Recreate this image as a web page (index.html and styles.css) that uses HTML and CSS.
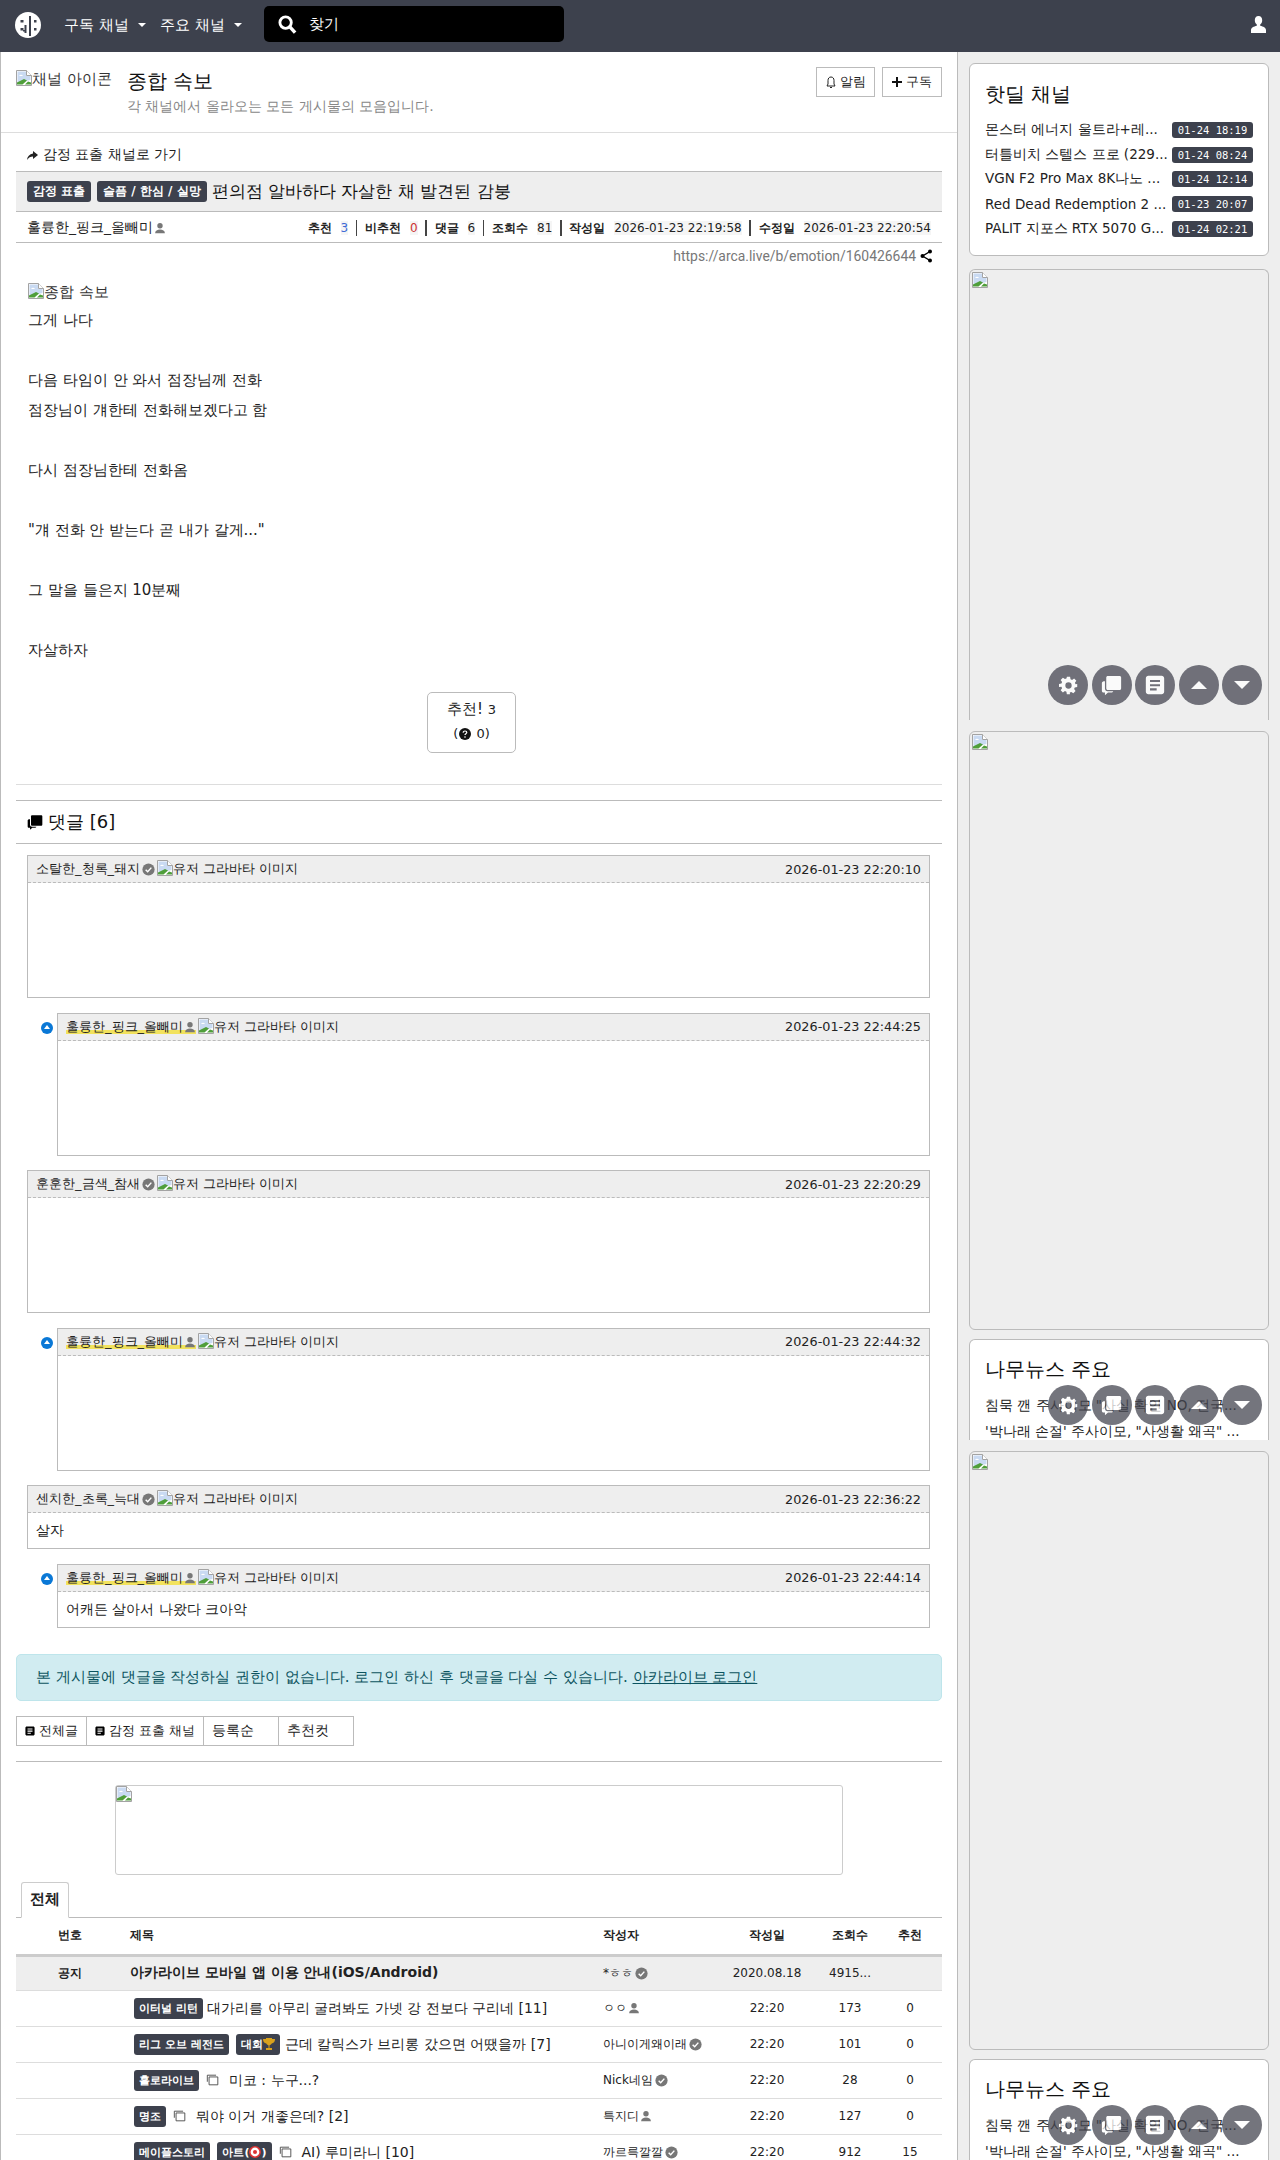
FILE: index.html
```html
<!DOCTYPE html>
<html lang="ko">
<head>
    <meta charset="UTF-8">
    <title>편의점 알바하다 자살한 채 발견된 감붕 - 종합 속보</title>
    <link rel="stylesheet" href="styles.css">
</head>
<body>
    <!-- shared icons -->
    <svg class="defs" width="0" height="0">
        <symbol id="i-broken" viewBox="0 0 16 16">
            <path d="M.5.5h10l5 5v10H.5z" fill="#fff" stroke="#a3a3a3"/>
            <path d="M1.500 1.500h8.500v4.500h4.500v4L1.500 13z" fill="#c9daf2"/>
            <path d="M3 6c1-1.600 3-1.600 4 0H3z" fill="#fff"/>
            <path d="M1 14.500v-2l7-3.500 3 1.500-4.500 4z" fill="#4f9e3a"/>
            <path d="M9 14.500l3-3 3 1v2z" fill="#4f9e3a"/>
            <path d="M10.500.5v5h5" fill="#fff" stroke="#a3a3a3"/>
        </symbol>
        <symbol id="i-check" viewBox="0 0 16 16">
            <circle cx="8" cy="8" r="7.500" fill="#777"/>
            <path d="M4.500 8.200l2.500 2.500 4.500-5" fill="none" stroke="#fff" stroke-width="1.800"/>
        </symbol>
        <symbol id="i-person" viewBox="0 0 16 16">
            <circle cx="8" cy="5" r="3.600"/>
            <path d="M1.500 15c0-3.500 3-5 6.500-5s6.500 1.500 6.500 5z"/>
        </symbol>
        <symbol id="i-gear" viewBox="0 0 24 24">
            <path fill-rule="evenodd" d="M10 1h4l.6 3.100 1.900.8 2.600-1.800 2.800 2.800-1.800 2.600.8 1.900L23 10v4l-3.100.6-.8 1.900 1.800 2.600-2.800 2.800-2.600-1.800-1.900.8L13.900 23h-4l-.5-3.100-1.900-.8-2.600 1.800-2.800-2.800 1.800-2.600-.8-1.900L0 14v-4l3.100-.6.800-1.900-1.800-2.600 2.800-2.800 2.600 1.800 1.900-.8zM12 8a4 4 0 1 0 0 8 4 4 0 0 0 0-8z"/>
        </symbol>
        <symbol id="i-chat" viewBox="0 0 24 24">
            <path d="M8 1h13c1.300 0 2 .7 2 2v12c0 1.300-.7 2-2 2H8c-1.300 0-2-.7-2-2V3c0-1.300.7-2 2-2z"/>
            <path d="M4.500 7v8.500c0 1.800 1.200 3 3 3H14c-.3 1-1.200 1.500-2.500 1.500H8l-3.500 3v-3H3c-1.300 0-2-.7-2-2V9c0-1.300 1.300-2 3.500-2z"/>
        </symbol>
        <symbol id="i-doc" viewBox="0 0 24 24">
            <path fill-rule="evenodd" d="M4 1h16c1.500 0 3 1.500 3 3v16c0 1.500-1.500 3-3 3H4c-1.500 0-3-1.500-3-3V4c0-1.500 1.500-3 3-3zm2 5v2.500h12V6zm0 5v2.500h12V11zm0 5v2.500h8V16z"/>
        </symbol>
        <symbol id="i-copy" viewBox="0 0 16 16">
            <path d="M3.500 4.500h10v9h-10zM1.500 10V2.500h10" fill="none" stroke="#444" stroke-width="1"/>
        </symbol>
    </svg>

    <nav class="navbar">
        <span class="logo">
            <svg viewBox="0 0 26 26" width="26" height="26">
                <circle cx="13" cy="13" r="13" fill="#fff"/>
                <path d="M14 4h2v20h-2zM5.500 8h3v2.500h-3zM5.500 16h3v2.500h-3zM9.500 13h2v8h-2v-1.500H8V18h1.500zM19 8h2.500v2.500H19zM19 16h2.500v2.500H19z" fill="#3d414d"/>
            </svg>
        </span>
        <a class="nav-link">구독 채널<i class="caret"></i></a>
        <a class="nav-link">주요 채널<i class="caret"></i></a>
        <div class="search">
            <svg viewBox="0 0 20 20" width="19" height="19">
                <circle cx="8" cy="8" r="6" fill="none" stroke="#fff" stroke-width="3"/>
                <path d="M12.500 12.500l5.500 6" stroke="#fff" stroke-width="3.600"/>
            </svg>
            <span>찾기</span>
        </div>
        <svg class="nav-user" width="15" height="17" viewBox="0 0 15 17">
            <path d="M7.500 0c2.500 0 3.700 1.800 3.700 4.200 0 2-1 3.600-2 4.300v1.300c3 .8 5.800 2 5.800 4.200V17H0v-3c0-2.200 2.800-3.400 5.800-4.200V8.500c-1-.7-2-2.300-2-4.300C3.800 1.800 5 0 7.500 0z" fill="#fff"/>
        </svg>
    </nav>

    <div class="page">
        <main class="content">
            <header class="board-head">
                <span class="broken board-icon"><svg class="b-img"><use href="#i-broken"/></svg>채널 아이콘</span>
                <div class="board-title">
                    <h1>종합 속보</h1>
                    <p>각 채널에서 올라오는 모든 게시물의 모음입니다.</p>
                </div>
                <div class="board-btns">
                    <a class="btn-line">
                        <svg width="10" height="13" viewBox="0 0 10 13"><path d="M5 1c2 0 3 1.500 3 3.500V8l1 2H1l1-2V4.500C2 2.500 3 1 5 1zM4 11.500h2" fill="none" stroke="#222" stroke-width="1"/></svg>
                        알림
                    </a>
                    <a class="btn-line">
                        <svg width="10" height="10" viewBox="0 0 10 10"><path d="M4 0h2v4h4v2H6v4H4V6H0V4h4z" fill="#111"/></svg>
                        구독
                    </a>
                </div>
            </header>

            <article class="post">
                <a class="goto">
                    <svg width="11" height="9" viewBox="0 0 11 9"><path d="M6 0l5 4-5 4V5.500C3.500 5.500 1.500 6.500 0 9c.3-3.500 2.500-6 6-6.500z" fill="#222"/></svg>
                    감정 표출 채널로 가기
                </a>
                <div class="post-title">
                    <span class="tag">감정 표출</span>
                    <span class="tag">슬픔 / 한심 / 실망</span>
                    <span class="title-text">편의점 알바하다 자살한 채 발견된 감붕</span>
                </div>
                <div class="post-meta">
                    <span class="author">훌륭한_핑크_올빼미<svg class="i-user"><use href="#i-person"/></svg></span>
                    <div class="stats">
                        <b>추천</b><span class="val blue">3</span><i class="sep"></i>
                        <b>비추천</b><span class="val red">0</span><i class="sep"></i>
                        <b>댓글</b><span class="val">6</span><i class="sep"></i>
                        <b>조회수</b><span class="val">81</span><i class="sep"></i>
                        <b>작성일</b><span class="val">2026-01-23 22:19:58</span><i class="sep"></i>
                        <b>수정일</b><span class="val">2026-01-23 22:20:54</span>
                    </div>
                </div>
                <div class="post-url">
                    <span>https://arca.live/b/emotion/160426644</span>
                    <svg width="12" height="14" viewBox="0 0 12 14"><circle cx="10" cy="2.500" r="2"/><circle cx="2.500" cy="7" r="2"/><circle cx="10" cy="11.500" r="2"/><path d="M10 2.500L2.500 7l7.500 4.500" fill="none" stroke="#000" stroke-width="1.400"/></svg>
                </div>

                <div class="post-body">
                    <div class="broken body-img"><svg class="b-img"><use href="#i-broken"/></svg>종합 속보</div>
                    <p>그게 나다</p>
                    <p>&nbsp;</p>
                    <p>다음 타임이 안 와서 점장님께 전화</p>
                    <p>점장님이 걔한테 전화해보겠다고 함</p>
                    <p>&nbsp;</p>
                    <p>다시 점장님한테 전화옴</p>
                    <p>&nbsp;</p>
                    <p>"걔 전화 안 받는다 곧 내가 갈게..."</p>
                    <p>&nbsp;</p>
                    <p>그 말을 들은지 10분째</p>
                    <p>&nbsp;</p>
                    <p>자살하자</p>
                </div>

                <div class="vote-wrap">
                    <button class="vote">
                        <span class="vote-top">추천! <small>3</small></span>
                        <span class="vote-sub">(<svg width="12" height="12" viewBox="0 0 12 12"><circle cx="6" cy="6" r="6" fill="#111"/><path d="M4.200 4.700c0-1.200.9-1.700 1.800-1.700s1.800.6 1.800 1.500c0 1.200-1.800 1.200-1.800 2.500" fill="none" stroke="#fff" stroke-width="1.200"/><circle cx="6" cy="9" r=".8" fill="#fff"/></svg>&nbsp;0)</span>
                    </button>
                </div>
            </article>

            <section class="comments">
                <h2 class="comment-head">
                    <svg width="16" height="17" viewBox="0 0 24 24"><use href="#i-chat"/></svg>
                    댓글 [6]
                </h2>
                <div class="comment-list">
                    <div class="comment">
                        <div class="comment-top">
                            <span class="name">소탈한_청록_돼지</span><svg class="i-badge"><use href="#i-check"/></svg>
                            <span class="broken"><svg class="b-img"><use href="#i-broken"/></svg>유저 그라바타 이미지</span>
                            <time>2026-01-23 22:20:10</time>
                        </div>
                        <div class="comment-empty"></div>
                    </div>
                    <div class="comment reply">
                        <div class="comment-top">
                            <span class="name mine">훌륭한_핑크_올빼미<svg class="i-user"><use href="#i-person"/></svg></span>
                            <span class="broken"><svg class="b-img"><use href="#i-broken"/></svg>유저 그라바타 이미지</span>
                            <time>2026-01-23 22:44:25</time>
                        </div>
                        <div class="comment-empty"></div>
                    </div>
                    <div class="comment">
                        <div class="comment-top">
                            <span class="name">훈훈한_금색_참새</span><svg class="i-badge"><use href="#i-check"/></svg>
                            <span class="broken"><svg class="b-img"><use href="#i-broken"/></svg>유저 그라바타 이미지</span>
                            <time>2026-01-23 22:20:29</time>
                        </div>
                        <div class="comment-empty"></div>
                    </div>
                    <div class="comment reply">
                        <div class="comment-top">
                            <span class="name mine">훌륭한_핑크_올빼미<svg class="i-user"><use href="#i-person"/></svg></span>
                            <span class="broken"><svg class="b-img"><use href="#i-broken"/></svg>유저 그라바타 이미지</span>
                            <time>2026-01-23 22:44:32</time>
                        </div>
                        <div class="comment-empty"></div>
                    </div>
                    <div class="comment">
                        <div class="comment-top">
                            <span class="name">센치한_초록_늑대</span><svg class="i-badge"><use href="#i-check"/></svg>
                            <span class="broken"><svg class="b-img"><use href="#i-broken"/></svg>유저 그라바타 이미지</span>
                            <time>2026-01-23 22:36:22</time>
                        </div>
                        <div class="comment-text">살자</div>
                    </div>
                    <div class="comment reply">
                        <div class="comment-top">
                            <span class="name mine">훌륭한_핑크_올빼미<svg class="i-user"><use href="#i-person"/></svg></span>
                            <span class="broken"><svg class="b-img"><use href="#i-broken"/></svg>유저 그라바타 이미지</span>
                            <time>2026-01-23 22:44:14</time>
                        </div>
                        <div class="comment-text">어캐든 살아서 나왔다 크아악</div>
                    </div>
                </div>
                <div class="alert">본 게시물에 댓글을 작성하실 권한이 없습니다. 로그인 하신 후 댓글을 다실 수 있습니다. <a>아카라이브 로그인</a></div>
            </section>

            <div class="list-btns">
                <a class="btn-tab"><svg width="10" height="12" viewBox="0 0 24 24"><use href="#i-doc"/></svg>전체글</a>
                <a class="btn-tab"><svg width="10" height="12" viewBox="0 0 24 24"><use href="#i-doc"/></svg>감정 표출 채널</a>
                <a class="btn-tab wide">등록순</a>
                <a class="btn-tab wide">추천컷</a>
            </div>

            <div class="ad-wrap">
                <div class="ad-banner"><svg class="b-img"><use href="#i-broken"/></svg></div>
            </div>

            <div class="tabs"><a class="tab">전체</a></div>

            <div class="board">
                <div class="row row-head">
                    <span class="c-num">번호</span><span class="c-title">제목</span><span class="c-author">작성자</span>
                    <span class="c-date">작성일</span><span class="c-view">조회수</span><span class="c-like">추천</span>
                </div>
                <div class="row row-notice">
                    <span class="c-num">공지</span><span class="c-title">아카라이브 모바일 앱 이용 안내(iOS/Android)</span>
                    <span class="c-author small">*ㅎㅎ<svg class="i-badge"><use href="#i-check"/></svg></span>
                    <span class="c-date">2020.08.18</span><span class="c-view">4915...</span><span class="c-like"></span>
                </div>
                <div class="row">
                    <span class="c-num"></span>
                    <span class="c-title"><span class="tag">이터널 리턴</span> 대가리를 아무리 굴려봐도 가넷 강 전보다 구리네 [11]</span>
                    <span class="c-author small">ㅇㅇ<svg class="i-user"><use href="#i-person"/></svg></span>
                    <span class="c-date">22:20</span><span class="c-view">173</span><span class="c-like">0</span>
                </div>
                <div class="row">
                    <span class="c-num"></span>
                    <span class="c-title"><span class="tag">리그 오브 레전드</span> <span class="tag">대회<svg width="12" height="13" viewBox="0 0 12 13"><path d="M3 0h6v1h3c0 3-1.500 4-3.300 4.500C8.200 6.500 7 7 6.500 7.500V10H9v2H3v-2h2.500V7.500C5 7 3.800 6.500 3.300 5.500 1.500 5 0 4 0 1h3z" fill="#d9a21c"/></svg></span> 근데 칼릭스가 브리롱 갔으면 어땠을까 [7]</span>
                    <span class="c-author small">아니이게왜이래<svg class="i-badge"><use href="#i-check"/></svg></span>
                    <span class="c-date">22:20</span><span class="c-view">101</span><span class="c-like">0</span>
                </div>
                <div class="row">
                    <span class="c-num"></span>
                    <span class="c-title"><span class="tag">홀로라이브</span> <svg class="i-copy"><use href="#i-copy"/></svg> 미코 : 누구...?</span>
                    <span class="c-author small">Nick네임<svg class="i-badge"><use href="#i-check"/></svg></span>
                    <span class="c-date">22:20</span><span class="c-view">28</span><span class="c-like">0</span>
                </div>
                <div class="row">
                    <span class="c-num"></span>
                    <span class="c-title"><span class="tag">명조</span> <svg class="i-copy"><use href="#i-copy"/></svg> 뭐야 이거 개좋은데? [2]</span>
                    <span class="c-author small">특지디<svg class="i-user"><use href="#i-person"/></svg></span>
                    <span class="c-date">22:20</span><span class="c-view">127</span><span class="c-like">0</span>
                </div>
                <div class="row">
                    <span class="c-num"></span>
                    <span class="c-title"><span class="tag">메이플스토리</span> <span class="tag">아트(<svg width="12" height="12" viewBox="0 0 12 12"><circle cx="6" cy="6" r="5.200" fill="#fff" stroke="#d33" stroke-width="1.600"/><circle cx="6" cy="6" r="2" fill="#d33"/></svg>)</span> <svg class="i-copy"><use href="#i-copy"/></svg> AI) 루미라니 [10]</span>
                    <span class="c-author small">까르륵깔깔<svg class="i-badge"><use href="#i-check"/></svg></span>
                    <span class="c-date">22:20</span><span class="c-view">912</span><span class="c-like">15</span>
                </div>
            </div>
        </main>

        <aside class="sidebar">
            <div class="card card-deal">
                <h3>핫딜 채널</h3>
                <div class="deal"><span>몬스터 에너지 울트라+레...</span><time>01-24 18:19</time></div>
                <div class="deal"><span>터틀비치 스텔스 프로 (229...</span><time>01-24 08:24</time></div>
                <div class="deal"><span>VGN F2 Pro Max 8K나노 ...</span><time>01-24 12:14</time></div>
                <div class="deal"><span>Red Dead Redemption 2 ...</span><time>01-23 20:07</time></div>
                <div class="deal"><span>PALIT 지포스 RTX 5070 G...</span><time>01-24 02:21</time></div>
            </div>

            <div class="card-ad ad-first">
                <svg class="b-img"><use href="#i-broken"/></svg>
                <div class="float-btns">
                    <a><svg width="19" height="19"><use href="#i-gear"/></svg></a>
                    <a><svg width="21" height="21"><use href="#i-chat"/></svg></a>
                    <a><svg width="20" height="20"><use href="#i-doc"/></svg></a>
                    <a><i class="tri up"></i></a>
                    <a><i class="tri down"></i></a>
                </div>
            </div>
            <div class="card-ad ad-tall"><svg class="b-img"><use href="#i-broken"/></svg></div>

            <div class="card card-news">
                <h3>나무뉴스 주요</h3>
                <p>침묵 깬 주사이모 "사실 확인 NO, 전국...</p>
                <p>'박나래 손절' 주사이모, "사생활 왜곡" ...</p>
                <div class="float-btns">
                    <a><svg width="19" height="19"><use href="#i-gear"/></svg></a>
                    <a><svg width="21" height="21"><use href="#i-chat"/></svg></a>
                    <a><svg width="20" height="20"><use href="#i-doc"/></svg></a>
                    <a><i class="tri up"></i></a>
                    <a><i class="tri down"></i></a>
                </div>
            </div>
            <div class="card-ad ad-tall"><svg class="b-img"><use href="#i-broken"/></svg></div>
            <div class="card card-news">
                <h3>나무뉴스 주요</h3>
                <p>침묵 깬 주사이모 "사실 확인 NO, 전국...</p>
                <p>'박나래 손절' 주사이모, "사생활 왜곡" ...</p>
                <div class="float-btns">
                    <a><svg width="19" height="19"><use href="#i-gear"/></svg></a>
                    <a><svg width="21" height="21"><use href="#i-chat"/></svg></a>
                    <a><svg width="20" height="20"><use href="#i-doc"/></svg></a>
                    <a><i class="tri up"></i></a>
                    <a><i class="tri down"></i></a>
                </div>
            </div>
        </aside>
    </div>
</body>
</html>
```

FILE: styles.css
```css
* {
    box-sizing: border-box;
}
html, body {
    margin: 0;
    height: 2160px;
    overflow: hidden;
}
body {
    font-family: "DejaVu Sans", sans-serif;
    font-size: 14px;
    color: #222;
    background-color: #eee;
}
.defs {
    position: absolute;
}
svg {
    flex: none;
}

/* navbar */
.navbar {
    display: flex;
    align-items: center;
    height: 52px;
    background-color: #3d414d;
    color: #fff;
}
.logo {
    display: flex;
    margin: -2px 0 0 15px;
}
.nav-link {
    display: flex;
    align-items: center;
    margin-left: 23px;
    margin-top: -2px;
    font-size: 15px;
}
.nav-link + .nav-link {
    margin-left: 14px;
}
.caret {
    width: 0;
    height: 0;
    margin-left: 9px;
    border-top: 4px solid #fff;
    border-left: 4px solid transparent;
    border-right: 4px solid transparent;
}
.search {
    display: flex;
    align-items: center;
    gap: 12px;
    width: 300px;
    height: 36px;
    margin: -4px 0 0 22px;
    padding-left: 14px;
    background-color: #000;
    border-radius: 5px;
    font-size: 14.500px;
}
.nav-user {
    margin: -3px 14px 0 auto;
}

/* page */
.page {
    display: flex;
    height: 2108px;
    overflow: hidden;
}
.content {
    width: 958px;
    flex: none;
    padding: 0 15px;
    background-color: #fff;
    border-left: 1px solid #bbb;
    border-right: 1px solid #bbb;
}
.b-img {
    width: 16px;
    height: 16px;
}
.broken {
    display: inline-flex;
    align-items: flex-start;
}

/* board header */
.board-head {
    display: flex;
    height: 81px;
    margin: 0 -15px;
    padding: 0 15px;
    border-bottom: 1px solid #ddd;
}
.board-icon {
    width: 96px;
    height: 30px;
    margin-top: 18px;
    overflow: hidden;
    white-space: nowrap;
    font-size: 15px;
    color: #333;
}
.board-title {
    margin-left: 15px;
    padding-top: 16px;
}
.board-title h1 {
    margin: 0;
    font-size: 20px;
    font-weight: 400;
    line-height: 26px;
    color: #111;
}
.board-title p {
    margin: 4px 0 0;
    font-size: 14px;
    color: #888;
}
.board-btns {
    display: flex;
    gap: 7px;
    margin: 15px 0 0 auto;
}
.btn-line {
    display: flex;
    align-items: center;
    justify-content: center;
    gap: 4px;
    width: 60px;
    height: 30px;
    border: 1px solid #bbb;
    font-size: 12.500px;
}
.btn-line:first-child {
    width: 59px;
}

/* post */
.goto {
    display: flex;
    align-items: center;
    gap: 5px;
    height: 38px;
    padding: 6px 0 0 11px;
    font-size: 14px;
}
.post-title {
    display: flex;
    align-items: center;
    height: 41px;
    padding-left: 11px;
    background-color: #eee;
    border-top: 1px solid #bbb;
    border-bottom: 1px solid #bbb;
}
.tag {
    display: inline-flex;
    align-items: center;
    height: 21px;
    margin-right: 6px;
    padding: 0 6px;
    vertical-align: middle;
    background-color: #3d414d;
    border-radius: 3px;
    color: #fff;
    font-size: 12px;
    font-weight: 700;
}
.title-text {
    margin-left: -1px;
    font-size: 17px;
    color: #111;
}
.post-meta {
    display: flex;
    align-items: center;
    justify-content: space-between;
    height: 31px;
    padding: 2px 11px 0;
    border-bottom: 1px solid #bbb;
}
.author {
    display: flex;
    align-items: center;
    font-size: 14px;
}
.i-user {
    width: 12px;
    height: 12px;
    margin-left: 1px;
    fill: #777;
}
.i-badge {
    width: 13px;
    height: 13px;
    margin-left: 2px;
}
.stats {
    display: flex;
    align-items: center;
    font-size: 12px;
}
.val {
    margin-left: 9px;
    background-color: #f5f5f5;
}
.val.blue {
    color: #3d6bd6;
}
.val.red {
    color: #c33;
}
.sep {
    width: 1.500px;
    height: 16px;
    margin: 0 7.700px;
    background-color: #444;
}
.post-url {
    display: flex;
    align-items: center;
    justify-content: flex-end;
    gap: 4px;
    height: 26px;
    padding-right: 10px;
    color: #777;
    font-family: "Roboto", sans-serif;
    font-size: 13.900px;
}
.post-body {
    padding: 13px 12px 0;
    font-size: 15px;
}
.body-img {
    display: flex;
    align-items: flex-start;
    height: 23px;
    padding-top: 1px;
    color: #333;
}
.post-body p {
    margin: 0;
    line-height: 30px;
    color: #222;
}
.vote-wrap {
    display: flex;
    justify-content: center;
    padding: 27px 15px 31px 0;
    border-bottom: 1px solid #ddd;
}
.vote {
    display: flex;
    flex-direction: column;
    align-items: center;
    width: 89px;
    height: 61px;
    padding: 7px 0 0;
    background-color: #fff;
    border: 1px solid #bbb;
    border-radius: 5px;
    color: #222;
    font-family: inherit;
}
.vote-top {
    font-size: 15px;
}
.vote-top small {
    font-size: 13px;
}
.vote-sub {
    display: flex;
    align-items: center;
    gap: 1px;
    margin-top: 7px;
    font-size: 13px;
}

/* comments */
.comments {
    margin-top: 15px;
}
.comment-head {
    display: flex;
    align-items: center;
    gap: 5px;
    height: 44px;
    margin: 0;
    padding-left: 11px;
    font-size: 18px;
    font-weight: 400;
    color: #111;
    border-top: 1px solid #bbb;
    border-bottom: 1px solid #bbb;
}
.comment-list {
    display: flex;
    flex-direction: column;
    gap: 14.600px;
    margin: 11px 0 0 11px;
    padding-right: 12px;
}
.comment {
    border: 1px solid #bbb;
}
.comment.reply {
    position: relative;
    margin-left: 30px;
}
.comment.reply::before {
    content: "";
    position: absolute;
    left: -17px;
    top: 8px;
    width: 12px;
    height: 12px;
    border-radius: 50%;
    background-color: #0a78d6;
}
.comment.reply::after {
    content: "";
    position: absolute;
    left: -14px;
    top: 11px;
    border-bottom: 4px solid #fff;
    border-left: 3px solid transparent;
    border-right: 3px solid transparent;
}
.comment-top {
    display: flex;
    align-items: center;
    height: 27px;
    padding: 0 8px;
    background-color: #eee;
    border-bottom: 1px dashed #bbb;
    font-size: 13px;
}
.comment-top .broken {
    margin-left: 2px;
}
.comment-top time {
    margin-left: auto;
    font-size: 12.800px;
}
.name {
    display: flex;
    align-items: center;
}
.name.mine {
    background: linear-gradient(transparent 65%, #f2e25c 65%, #f2e25c 90%, transparent 90%);
}
.comment-empty {
    height: 114px;
}
.comment-text {
    height: 35px;
    padding: 0 8px;
    line-height: 34px;
    font-size: 14px;
}
.alert {
    height: 47px;
    margin-top: 26px;
    padding: 0 19px;
    line-height: 44px;
    background-color: #d1ecf1;
    border: 1px solid #bee5eb;
    border-radius: 5px;
    color: #0c5460;
    font-size: 15px;
}
.alert a {
    text-decoration: underline;
}

/* list */
.list-btns {
    display: flex;
    margin-top: 15px;
    padding-bottom: 15px;
    border-bottom: 1px solid #bbb;
}
.btn-tab {
    display: flex;
    align-items: center;
    gap: 4px;
    height: 30px;
    padding: 0 8px;
    margin-right: -1px;
    border: 1px solid #bbb;
    font-size: 13px;
}
.btn-tab.wide {
    width: 76px;
    font-size: 14px;
}
.ad-wrap {
    display: flex;
    justify-content: center;
    margin-top: 23px;
}
.ad-banner {
    width: 728px;
    height: 90px;
    border: 1px solid #ccc;
    border-radius: 3px;
}
.tabs {
    display: flex;
    height: 43px;
    padding: 7px 0 0 5px;
    border-bottom: 1px solid #bbb;
}
.tab {
    display: flex;
    align-items: center;
    justify-content: center;
    width: 48px;
    height: 36px;
    background-color: #fff;
    border: 1px solid #ccc;
    border-bottom-color: #fff;
    border-radius: 3px 3px 0 0;
    font-size: 14.500px;
    font-weight: 700;
}
.row {
    display: grid;
    grid-template-columns: 108px 472px 131px 80px 86px 34px;
    align-items: center;
    height: 36px;
    border-bottom: 1px solid #ddd;
    font-size: 13px;
}
.row-head {
    height: 39px;
    border-bottom: 3px solid #ccc;
    font-size: 12px;
    font-weight: 700;
}
.row-notice {
    height: 34px;
    background-color: #eee;
}
.row-notice .c-num {
    font-weight: 700;
}
.row-notice .c-title {
    padding: 0 0 1px 6px;
    font-size: 14px;
    font-weight: 700;
}
.c-num, .c-date, .c-view, .c-like {
    text-align: center;
    font-size: 12px;
}
.c-title {
    padding-left: 10px;
    white-space: nowrap;
    font-size: 14px;
}
.row-head .c-title {
    padding-left: 6px;
    font-size: 12px;
}
.c-title .tag {
    height: 21px;
    margin-right: 0;
    padding: 0 5px;
    font-size: 11px;
}
.c-title .tag + .tag {
    margin-left: 3px;
}
.c-author {
    display: flex;
    align-items: center;
    padding-left: 7px;
    font-size: 12px;
}
.i-copy {
    width: 14px;
    height: 14px;
    margin: 0 4px 0 3px;
    vertical-align: middle;
}

/* sidebar */
.sidebar {
    display: flex;
    flex-direction: column;
    width: 300px;
    margin-left: 11px;
    padding-top: 11px;
}
.card {
    position: relative;
    flex: none;
    padding: 0 15px;
    background-color: #fff;
    border: 1px solid #bbb;
    border-radius: 6px;
}
.card h3 {
    margin: 0;
    font-size: 20px;
    font-weight: 400;
    color: #111;
}
.card-deal {
    height: 193px;
    margin-bottom: 13px;
}
.card-deal h3 {
    margin: 16px 0 9px;
    line-height: 29px;
}
.deal {
    display: flex;
    align-items: center;
    justify-content: space-between;
    height: 24.600px;
    white-space: nowrap;
    font-size: 13.500px;
    color: #222;
}
.deal time {
    width: 81px;
    height: 16px;
    background-color: #3d414d;
    border-radius: 3px;
    color: #fff;
    text-align: center;
    line-height: 16px;
    font-family: "DejaVu Sans Mono", monospace;
    font-size: 10.500px;
}
.card-ad {
    position: relative;
    flex: none;
    padding: 2px 0 0 2px;
    background-color: #eee;
    border: 1px solid #bbb;
    border-radius: 6px 6px 0 0;
    border-bottom: none;
}
.ad-first {
    height: 451px;
    margin-bottom: 11px;
}
.ad-tall {
    height: 599px;
    margin-bottom: 9px;
    border-bottom: 1px solid #bbb;
    border-radius: 6px;
}
.card-ad.ad-tall + .card-news {
    margin-bottom: 11px;
}
.card-news {
    height: 101px;
    border-bottom: none;
    border-radius: 6px 6px 0 0;
}
.card-news h3 {
    margin: 15px 0 9px;
    line-height: 28px;
}
.card-news p {
    margin: 0;
    line-height: 26px;
    white-space: nowrap;
    font-size: 13.500px;
    color: #222;
}
.float-btns {
    position: absolute;
    right: 6px;
    bottom: 15px;
    display: flex;
    gap: 3.500px;
}
.float-btns a {
    display: flex;
    align-items: center;
    justify-content: center;
    width: 40px;
    height: 40px;
    background-color: #464752;
    border-radius: 50%;
    fill: #fff;
    opacity: .75;
}
.tri {
    width: 0;
    height: 0;
    border-left: 8px solid transparent;
    border-right: 8px solid transparent;
}
.tri.up {
    border-bottom: 8px solid #fff;
}
.tri.down {
    border-top: 8px solid #fff;
}
```
